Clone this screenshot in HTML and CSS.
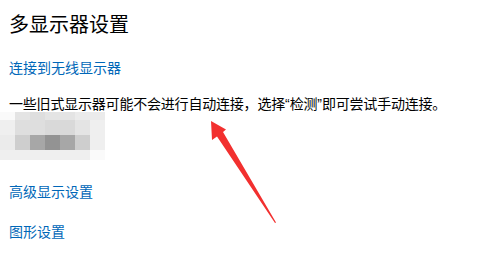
FILE: index.html
```html
<!DOCTYPE html>
<html lang="zh-CN">
<head>
  <meta charset="UTF-8">
  <meta name="viewport" content="width=device-width, initial-scale=1.0">
  <title>多显示器设置</title>
  <link rel="stylesheet" href="styles.css">
</head>
<body>
  <div class="page">
    <h1 class="title">多显示器设置</h1>
    <a class="link link-first" href="#">连接到无线显示器</a>
    <p class="note">一些旧式显示器可能不会进行自动连接，选择<span class="q">“</span>检测<span class="q">”</span>即可尝试手动连接。</p>

    <div class="mosaic">
      <span class="s0"></span><span class="s3"></span><span class="s4"></span><span class="s3"></span><span class="s3"></span><span class="s2"></span><span class="s2"></span>
      <span class="s1"></span><span class="s4"></span><span class="s4"></span><span class="s5"></span><span class="s5"></span><span class="s3"></span><span class="s1"></span>
      <span class="s2"></span><span class="s6"></span><span class="s7"></span><span class="s8"></span><span class="s7"></span><span class="s6"></span><span class="s1"></span>
      <span class="s1"></span><span class="s1"></span><span class="s1"></span><span class="s1"></span><span class="s1"></span><span class="s1"></span><span class="s0"></span>
    </div>

    <a class="link link-adv" href="#">高级显示设置</a>
    <a class="link link-gfx" href="#">图形设置</a>

    <svg class="arrow" width="80" height="110" viewBox="0 0 80 110">
      <path d="M2 2 L3 21 L8 17.5 L66 104 L67 103.5 L14 13 L17 10.5 Z" fill="#f2302f"/>
    </svg>
  </div>
</body>
</html>
```

FILE: styles.css
```css
body {
  margin: 0;
  background: #fff;
  font-family: "Microsoft YaHei", "Noto Sans CJK SC", sans-serif;
  color: #000;
}
.page {
  position: relative;
  width: 493px;
  height: 263px;
  padding: 10px 0 0 9px;
  box-sizing: border-box;
  overflow: hidden;
}
.title {
  margin: 0;
  font-size: 20px;
  font-weight: normal;
  line-height: 28px;
}
.link {
  display: block;
  font-size: 14px;
  line-height: 20px;
  color: #0067b8;
  text-decoration: none;
}
.link-first {
  margin-top: 19px;
}
.note {
  margin: 16px 0 0;
  font-size: 14px;
  line-height: 20px;
  letter-spacing: -0.2px;
}
.note .q {
  font-family: "Liberation Sans", sans-serif;
  letter-spacing: 0;
}
.mosaic {
  display: grid;
  grid-template-columns: repeat(7, 15px);
  grid-template-rows: 8px 15px 15px 10px;
  margin-left: -9px;
  margin-top: -2px;
  filter: blur(0.6px);
}
.mosaic span { display: block; }
.s0 { background: #fafafa; }
.s1 { background: #efefef; }
.s2 { background: #ebebeb; }
.s3 { background: #e4e4e4; }
.s4 { background: #dedede; }
.s5 { background: #d9d9d9; }
.s6 { background: #cecece; }
.s7 { background: #a7a7a7; }
.s8 { background: #939393; }
.link-adv {
  margin-top: 21px;
}
.link-gfx {
  margin-top: 20px;
}
.arrow {
  position: absolute;
  left: 209px;
  top: 119px;
}
```
